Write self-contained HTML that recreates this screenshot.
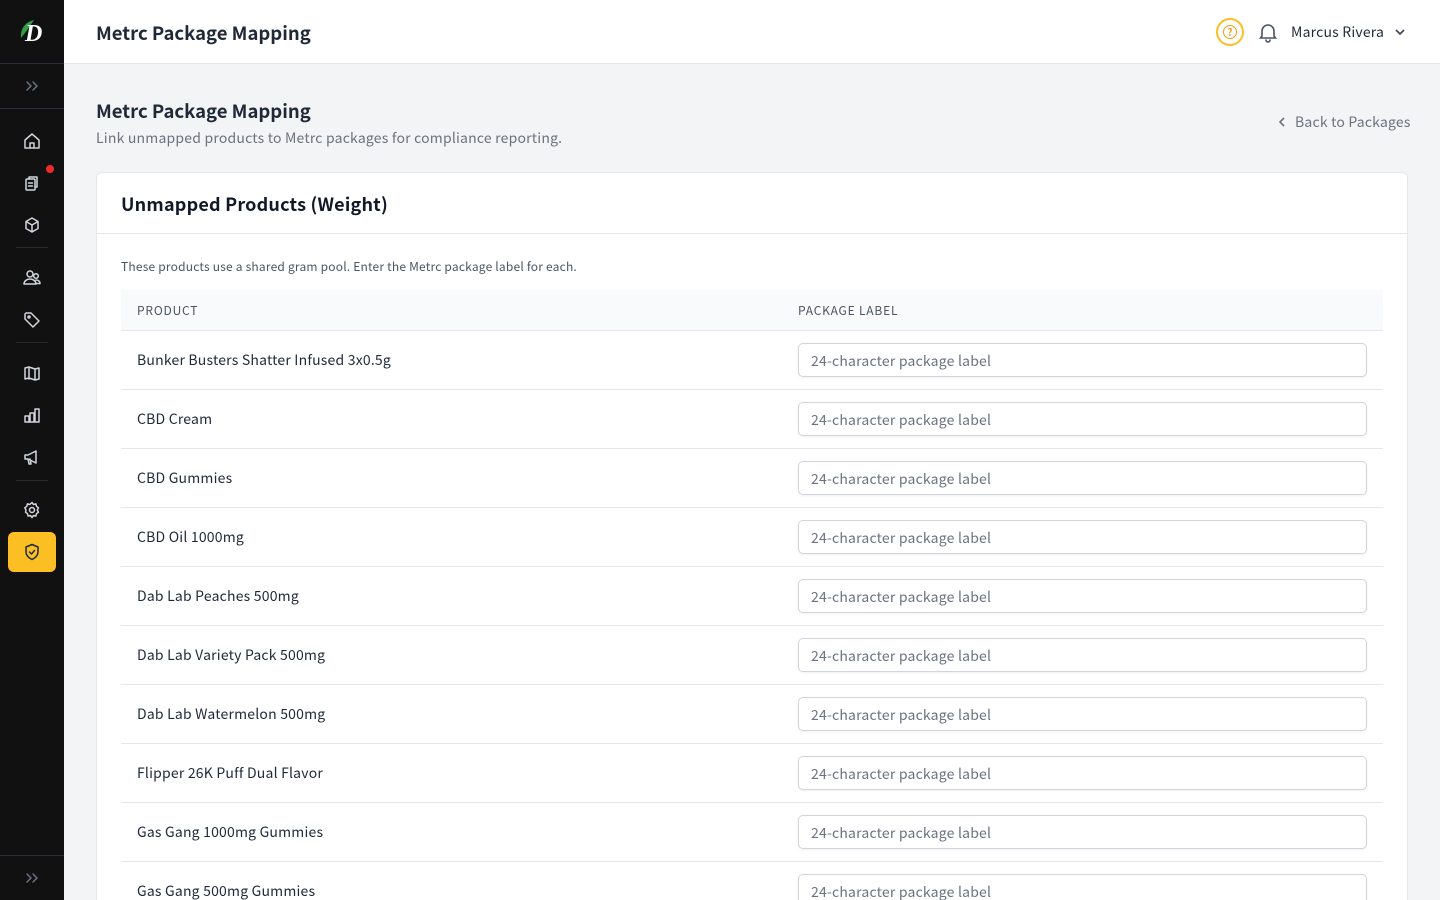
<!DOCTYPE html>
<html style="overflow:hidden;height:900px"><head><meta charset="utf-8"><style>
*{box-sizing:border-box;margin:0;padding:0}
body{width:1440px;height:900px;overflow:hidden;background:#f3f4f6;font-family:"Noto Sans CJK JP","Liberation Sans",sans-serif;color:#111827;position:relative;letter-spacing:.2px}
.side{position:absolute;left:0;top:0;width:64px;height:900px;background:#111112}
.side svg{position:absolute;left:22px;width:20px;height:20px;fill:none;stroke:#d1d5db;stroke-width:1.5;stroke-linecap:round;stroke-linejoin:round}
.sep{position:absolute;left:16px;width:32px;height:1px;background:#2a2a2e}
.top{position:absolute;left:64px;top:0;right:0;height:64px;background:#fff;border-bottom:1px solid #e5e7eb}
.card{position:absolute;left:96px;top:172px;width:1312px;height:728px;background:#fff;border:1px solid #e5e7eb;border-bottom:none;border-radius:6px 6px 0 0;overflow:hidden}
.row{position:absolute;left:24px;width:1262px;height:59px;border-bottom:1px solid #e5e7eb}
.row span{position:absolute;left:16px;top:19px;font-size:14px;color:#1f2937}
.row div{position:absolute;left:677px;top:12px;width:569px;height:34px;border:1px solid #d1d5db;border-radius:5px;box-shadow:0 1px 2px rgba(0,0,0,.06);font-size:14px;color:#6b7280;padding:7px 12px}
</style></head><body>
<div class="side">
<div style="position:absolute;left:18px;top:16px;width:28px;height:30px">
<svg style="left:0;top:0;width:28px;height:30px;stroke:none" viewBox="0 0 28 30"><path d="M3 22 C2 12 8 6 16 4 C12 10 8 16 3 22Z" fill="#2f9e44"/><text x="7" y="25" font-family="Liberation Serif" font-style="italic" font-weight="bold" font-size="24" fill="#fff">D</text></svg></div>
<div style="position:absolute;left:0;top:63px;width:64px;height:1px;background:#2a2f3a"></div>
<svg style="top:76px;stroke:#6b7280" viewBox="0 0 20 20"><path d="M5 6l4 4-4 4M11 6l4 4-4 4"/></svg>
<div style="position:absolute;left:0;top:108px;width:64px;height:1px;background:#2a2f3a"></div>
<svg style="top:131px" viewBox="0 0 20 20"><path d="M3 9l7-6 7 6v8H3z M8 17v-5h4v5"/></svg>
<svg style="top:173px" viewBox="0 0 20 20"><rect x="4" y="6" width="9" height="11" rx="1"/><path d="M7 6V4h8v10h-2M6.5 10h4M6.5 13h4"/></svg>
<div style="position:absolute;left:46px;top:165px;width:8px;height:8px;border-radius:50%;background:#ef2b2b"></div>
<svg style="top:215px" viewBox="0 0 20 20"><path d="M10 3l6 3.5v7L10 17l-6-3.5v-7zM4 6.5l6 3.5 6-3.5M10 10v7"/></svg>
<div class="sep" style="top:247px"></div>
<svg style="top:268px" viewBox="0 0 20 20"><circle cx="8" cy="6" r="3"/><circle cx="14" cy="8" r="2.3"/><path d="M2 16c0-3 3-5 6-5s6 2 6 5zM14 12c2 0 4 1 4 3.5h-4"/></svg>
<svg style="top:310px" viewBox="0 0 20 20"><path d="M3 4v5l8 8 6-6-8-8H4z"/><circle cx="7" cy="7" r="1"/></svg>
<div class="sep" style="top:342px"></div>
<svg style="top:363px" viewBox="0 0 20 20"><path d="M3 5l4-1 6 2 4-1v11l-4 1-6-2-4 1zM7 4v12M13 6v11"/></svg>
<svg style="top:405px" viewBox="0 0 20 20"><path d="M3 17V11h4v6M8 17V8h4v9M13 17V4h4v13M3 17h14"/></svg>
<svg style="top:447px" viewBox="0 0 20 20"><path d="M3 8v4h3l8 4V4L6 8zM6 12l1 5h2l-1-5"/></svg>
<div class="sep" style="top:480px"></div>
<svg style="top:500px" viewBox="0 0 20 20"><circle cx="10" cy="10" r="2.5"/><path d="M10 2.5l1.5 2 2.4-.6.6 2.4 2 1.5-1.2 2.2 1.2 2.2-2 1.5-.6 2.4-2.4-.6-1.5 2-1.5-2-2.4.6-.6-2.4-2-1.5L4 10 2.8 7.8l2-1.5.6-2.4 2.4.6z"/></svg>
<div style="position:absolute;left:8px;top:532px;width:48px;height:40px;border-radius:6px;background:#fbbf24"></div>
<svg style="top:542px;stroke:#1f2937" viewBox="0 0 20 20"><path d="M10 2.5l6 2.5v5c0 4-3 6-6 7.5-3-1.5-6-3.5-6-7.5V5z M7.5 10l2 2 3-3.5"/></svg>
<div style="position:absolute;left:0;top:855px;width:64px;height:1px;background:#2a2f3a"></div>
<svg style="top:868px;stroke:#6b7280" viewBox="0 0 20 20"><path d="M5 6l4 4-4 4M11 6l4 4-4 4"/></svg>
</div>
<div class="top">
<div style="position:absolute;left:32px;top:20px;font-size:18.5px;font-weight:700;color:#1f2937;letter-spacing:0">Metrc Package Mapping</div>
<div style="position:absolute;left:1152px;top:18px;width:28px;height:28px;border:2px solid #fbbf24;border-radius:50%;color:#f59e0b;font-size:13px;font-weight:700;text-align:center;line-height:24px"><span style="display:inline-block;width:14px;height:14px;border:1.5px solid #f59e0b;border-radius:50%;line-height:11px;font-size:10px;vertical-align:middle;margin-top:-2px">?</span></div>
<svg style="position:absolute;left:1193px;top:21px;width:22px;height:22px;fill:none;stroke:#4b5563;stroke-width:1.6;stroke-linecap:round" viewBox="0 0 22 22"><path d="M5 15V10a6 6 0 0 1 12 0v5l1.5 2h-15zM9 19a2 2 0 0 0 4 0"/></svg>
<div style="position:absolute;left:1227px;top:22px;font-size:14px;color:#1f2937">Marcus Rivera</div>
<svg style="position:absolute;left:1330px;top:26px;width:12px;height:12px;fill:none;stroke:#374151;stroke-width:1.6" viewBox="0 0 12 12"><path d="M2 4l4 4 4-4"/></svg>
</div>
<div style="position:absolute;left:96px;top:98px;font-size:18.5px;font-weight:700;color:#1f2937;letter-spacing:0">Metrc Package Mapping</div>
<div style="position:absolute;left:96px;top:128px;font-size:14px;color:#6b7280">Link unmapped products to Metrc packages for compliance reporting.</div>
<svg style="position:absolute;left:1276px;top:116px;width:12px;height:12px;fill:none;stroke:#6b7280;stroke-width:1.6" viewBox="0 0 12 12"><path d="M8 2L4 6l4 4"/></svg>
<div style="position:absolute;left:1295px;top:112px;font-size:14px;color:#6b7280">Back to Packages</div>
<div class="card">
<div style="position:absolute;left:24px;top:18px;font-size:18px;font-weight:700;color:#111827">Unmapped Products (Weight)</div>
<div style="position:absolute;left:0;top:60px;width:100%;height:1px;background:#e5e7eb"></div>
<div style="position:absolute;left:24px;top:85px;font-size:12px;color:#4b5563">These products use a shared gram pool. Enter the Metrc package label for each.</div>
<div style="position:absolute;left:24px;top:117px;width:1262px;height:41px;background:#f9fafb;border-bottom:1px solid #e5e7eb;font-size:12px;color:#4b5563;letter-spacing:.8px">
<span style="position:absolute;left:16px;top:12px">PRODUCT</span><span style="position:absolute;left:677px;top:12px">PACKAGE LABEL</span></div>
<div class="row" style="top:158px"><span>Bunker Busters Shatter Infused 3x0.5g</span><div>24-character package label</div></div>
<div class="row" style="top:217px"><span>CBD Cream</span><div>24-character package label</div></div>
<div class="row" style="top:276px"><span>CBD Gummies</span><div>24-character package label</div></div>
<div class="row" style="top:335px"><span>CBD Oil 1000mg</span><div>24-character package label</div></div>
<div class="row" style="top:394px"><span>Dab Lab Peaches 500mg</span><div>24-character package label</div></div>
<div class="row" style="top:453px"><span>Dab Lab Variety Pack 500mg</span><div>24-character package label</div></div>
<div class="row" style="top:512px"><span>Dab Lab Watermelon 500mg</span><div>24-character package label</div></div>
<div class="row" style="top:571px"><span>Flipper 26K Puff Dual Flavor</span><div>24-character package label</div></div>
<div class="row" style="top:630px"><span>Gas Gang 1000mg Gummies</span><div>24-character package label</div></div>
<div class="row" style="top:689px"><span>Gas Gang 500mg Gummies</span><div>24-character package label</div></div>
</div>
</body></html>
